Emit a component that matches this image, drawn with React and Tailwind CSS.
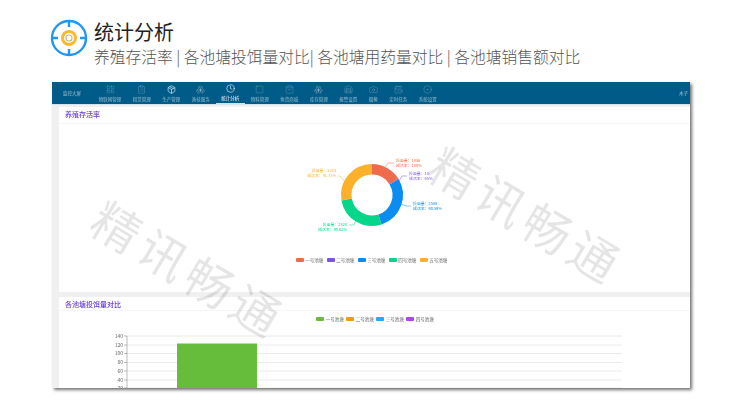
import { Boxes, ClipboardList, Package, LayoutGrid, Clock, Square, ShoppingBag, Warehouse, Camera, CalendarClock, CircleDot } from 'lucide-react'

const navItems = [
    { label: '物联网管理', icon: LayoutGrid },
    { label: '租赁管理', icon: ClipboardList },
    { label: '生产管理', icon: Package, bright: true },
    { label: '渔技服务', icon: Boxes },
    { label: '统计分析', icon: Clock, active: true },
    { label: '物料管理', icon: Square },
    { label: '鱼货商城', icon: ShoppingBag },
    { label: '库存管理', icon: Boxes },
    { label: '报警设置', icon: Warehouse },
    { label: '摄像', icon: Camera },
    { label: '定时任务', icon: CalendarClock },
    { label: '系统设置', icon: CircleDot },
]

const pondLegend = [
    { name: '一号池塘', color: 'bg-[#ee6c4d]' },
    { name: '二号池塘', color: 'bg-[#7b52e8]' },
    { name: '三号池塘', color: 'bg-[#0a8cf0]' },
    { name: '四号池塘', color: 'bg-[#05d68a]' },
    { name: '五号池塘', color: 'bg-[#fdb02a]' },
]

const feedLegend = [
    { name: '一号池塘', color: 'bg-[#66bd3c]' },
    { name: '二号池塘', color: 'bg-[#f39a12]' },
    { name: '三号池塘', color: 'bg-[#25a9ea]' },
    { name: '四号池塘', color: 'bg-[#b445e6]' },
]

const segments = [
    { from: 0, to: 58, color: '#ee6c4d' },
    { from: 58, to: 59, color: '#7b52e8' },
    { from: 59, to: 162, color: '#0a8cf0' },
    { from: 162, to: 260, color: '#05d68a' },
    { from: 260, to: 360, color: '#fdb02a' },
]

const donutLabels = [
    { x: 124, y: 33, lines: ['投苗量：1456', '成活率：100%'], color: '#ee6c4d', line: 'M111 40 L116 33 L122 33' },
    { x: 137, y: 46, lines: ['投苗量：18', '成活率：95%'], color: '#7b52e8', line: 'M125 54 L130 46 L135 46' },
    { x: 141, y: 76, lines: ['投苗量：2588', '成活率：90.59%'], color: '#0a8cf0', line: 'M129 74 L134 76 L139 76' },
    { x: 75, y: 97, lines: ['投苗量：2524', '成活率：90.62%'], color: '#05d68a', anchor: 'end', line: 'M84 90 L82 95 L77 95' },
    { x: 64, y: 43, lines: ['投苗量：3314', '成活率：91.73%'], color: '#fdb02a', anchor: 'end', line: 'M72 51 L68 46 L66 46' },
]

const yTicks = [
    { label: '140', y: 5 },
    { label: '120', y: 14 },
    { label: '100', y: 22.5 },
    { label: '80', y: 31.5 },
    { label: '60', y: 40 },
    { label: '40', y: 49 },
    { label: '20', y: 57 },
]

function arcPath(cx, cy, r, from, to) {
    const rad = (a) => ((a - 90) * Math.PI) / 180
    const end = to === 360 ? 359.99 : to
    const x1 = cx + r * Math.cos(rad(from))
    const y1 = cy + r * Math.sin(rad(from))
    const x2 = cx + r * Math.cos(rad(end))
    const y2 = cy + r * Math.sin(rad(end))
    return `M${x1} ${y1} A${r} ${r} 0 ${end - from > 180 ? 1 : 0} 1 ${x2} ${y2}`
}

function TargetIcon() {
    return (
        <svg width="38" height="38" viewBox="0 0 38 38" fill="none" className="shrink-0">
            <circle cx="19" cy="19" r="17" stroke="#2196f3" strokeWidth="2.4" />
            <path d="M19 1v7M19 30v7M1 19h7M30 19h7" stroke="#2196f3" strokeWidth="2.4" />
            <circle cx="19" cy="19" r="6.5" stroke="#fbb92d" strokeWidth="3" />
            <circle cx="19" cy="19" r="3" stroke="#c9b98a" strokeWidth="1.2" />
        </svg>
    )
}

function Legend({ items, itemWidth, className }) {
    return (
        <div className={`flex justify-center ${className}`}>
            {items.map((item, i) => (
                <div key={i} className={`flex items-center gap-[1.5px] ${itemWidth} last:w-auto`}>
                    <span className={`w-[8px] h-[4.5px] rounded-[1px] ${item.color}`}></span>
                    <span className="text-[4.5px] leading-none text-[#666]">{item.name}</span>
                </div>
            ))}
        </div>
    )
}

function Watermark({ className }) {
    return (
        <div className={`absolute rotate-[31deg] text-[48px] leading-none tracking-[6px] whitespace-nowrap text-black/10 pointer-events-none ${className}`}>
            精讯畅通
        </div>
    )
}

export default function App() {
    return (
        <div className="w-[750px] h-[420px] bg-white overflow-hidden font-['Noto_Sans_CJK_SC','Noto_Sans',sans-serif]">
            {/* Page heading */}
            <div className="flex gap-[6px] pl-[50px] pt-[19px] h-[82px]">
                <TargetIcon />
                <div>
                    <h1 className="text-[20px] leading-[26px] text-[#222]">统计分析</h1>
                    <p className="text-[15.75px] leading-[24px] font-light text-[#555] whitespace-nowrap">
                        养殖存活率 | 各池塘投饵量对比| 各池塘用药量对比 | 各池塘销售额对比
                    </p>
                </div>
            </div>

            {/* Screenshot frame */}
            <div className="relative ml-[52px] w-[638px] h-[306px] overflow-hidden bg-[#f0f0f0] shadow-[2px_2px_3px_rgba(0,0,0,0.55)] blur-[0.3px]">
                <div className="flex items-stretch h-[22px] pl-[11px] bg-[#005b88] border-b border-[#d5e3ea] box-content">
                    <div className="flex items-center text-[4.5px] text-white/60 w-[30px] shrink-0">监控大屏</div>
                    {navItems.map((item, i) => (
                        <div key={i} className={`flex flex-col items-center justify-end pb-[2.5px] px-[5.75px] ${item.active ? 'border-b border-[#cfe3ec] text-white' : 'text-white/55'}`}>
                            <item.icon className={`w-[9px] h-[9px] mb-[3.5px] ${item.bright || item.active ? 'text-white' : 'text-white/30'}`} strokeWidth={1.5} />
                            <span className="text-[4.5px] leading-none whitespace-nowrap">{item.label}</span>
                        </div>
                    ))}
                    <div className="ml-auto pr-[2px] self-center text-[4.5px] text-white/60">木子</div>
                </div>

                <div className="pl-[7px]">
                    {/* Survival rate */}
                    <div className="mt-[2px] h-[185px] bg-white">
                        <div className="h-[17px] pl-[6px] pt-[1px] text-[7px] font-medium leading-[12px] text-[#6a3fd0] border-b border-[#f6f6f6]">养殖存活率</div>
                        <div className="w-[625px] mt-[6px]">
                            <div className="flex justify-center">
                                <svg width="200" height="124" viewBox="0 0 200 124" fill="none">
                                    {segments.map((seg, i) => (
                                        <path key={i} d={arcPath(100, 65, 25.75, seg.from, seg.to)} stroke={seg.color} strokeWidth="10.5" />
                                    ))}
                                    {donutLabels.map((label, i) => (
                                        <g key={i} fill={label.color} fontSize="3.9" textAnchor={label.anchor || 'start'}>
                                            <path d={label.line} stroke={label.color} strokeWidth="0.5" fill="none" />
                                            <text x={label.x} y={label.y - 1}>{label.lines[0]}</text>
                                            <text x={label.x} y={label.y + 4}>{label.lines[1]}</text>
                                        </g>
                                    ))}
                                </svg>
                            </div>
                            <Legend items={pondLegend} itemWidth="w-[31px]" className="mt-[3px] h-[6px]" />
                        </div>
                    </div>

                    {/* Feed comparison */}
                    <div className="mt-[5px] h-[91px] bg-white">
                        <div className="h-[14px] pl-[6px] pt-[1px] text-[7px] font-medium leading-[12px] text-[#6a3fd0] border-b border-[#f6f6f6]">各池塘投饵量对比</div>
                        <Legend items={feedLegend} itemWidth="w-[30px]" className="mt-[5px] h-[6px] pl-[1px]" />
                        <svg width="631" height="60" viewBox="0 0 631 60" fill="none" className="mt-[9px]">
                            {yTicks.map((tick, i) => (
                                <g key={i}>
                                    <line x1="68" x2="563" y1={tick.y} y2={tick.y} stroke="#e4e4e4" strokeWidth="0.8" />
                                    <line x1="65" x2="68" y1={tick.y} y2={tick.y} stroke="#777" strokeWidth="0.5" />
                                    <text x="64" y={tick.y + 1.7} fontSize="5" fill="#666" textAnchor="end">{tick.label}</text>
                                </g>
                            ))}
                            <line x1="68" x2="68" y1="5" y2="60" stroke="#777" strokeWidth="0.5" />
                            <rect x="118" y="12.5" width="80" height="48" fill="#66bd3c" />
                        </svg>
                    </div>
                </div>

                <Watermark className="left-[30px] top-[162px]" />
                <Watermark className="left-[368px] top-[108px]" />
            </div>
        </div>
    )
}
